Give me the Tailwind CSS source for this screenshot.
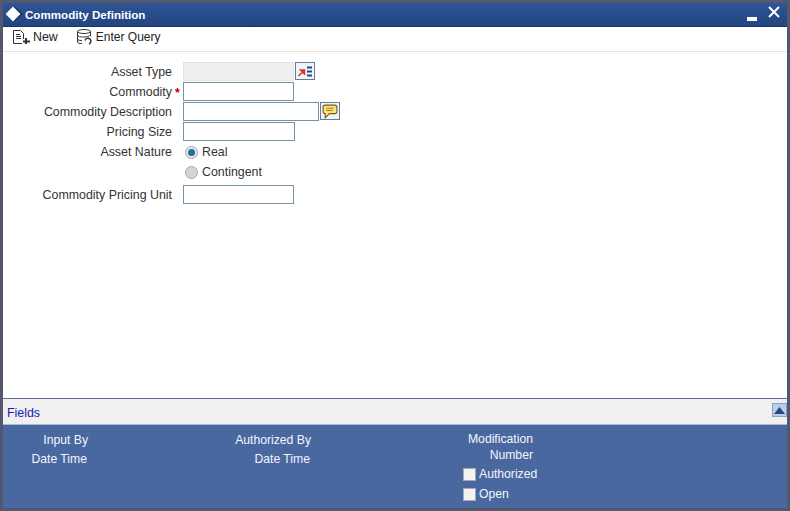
<!DOCTYPE html>
<html lang="en">
<head>
    <meta charset="UTF-8">
    <title>Commodity Definition</title>
    <script src="https://cdn.jsdelivr.net/npm/@tailwindcss/browser@4"></script>
</head>
<body class="w-[790px] h-[511px] overflow-hidden bg-[#53586f] font-['Liberation_Sans',Arial,sans-serif] text-[12.4px]">
    <div class="w-[790px] h-[511px] p-[3px] flex flex-col">
        <!-- Title bar -->
        <div class="h-[24px] flex items-center bg-gradient-to-b from-[#2f5597] to-[#23447f] border-b border-[#1a3566] text-white shrink-0">
            <svg class="w-[18px] h-[16px] ml-[2px] -mt-[1px]" viewBox="0 0 18 16"><path d="M9 0L18 8L9 16L0 8Z" fill="#16305f"/><path d="M8 0.500L15.500 8L8 15.500L0.500 8Z" fill="#fff"/></svg>
            <span class="ml-[2px] text-[11.6px] font-bold">Commodity Definition</span>
            <div class="ml-auto flex items-start mr-[7px]">
                <svg class="w-[10px] h-[5px] mt-[7px]" viewBox="0 0 10 5"><rect width="10" height="4" y="1" fill="#fff"/></svg>
                <svg class="w-[12px] h-[12px] ml-[11px] -mt-[3px]" viewBox="0 0 12 12"><path d="M1 1L11 11M11 1L1 11" stroke="#fff" stroke-width="2"/></svg>
            </div>
        </div>
        <!-- Toolbar -->
        <div class="h-[25px] flex items-center pb-[4px] bg-white border-b border-[#e4e4e4] text-[#222] shrink-0">
            <svg class="w-[18px] h-[15px] ml-[10px]" viewBox="0 0 18 15" fill="none" stroke="#333"><path d="M0.500 13.500V0.500H7.500L10.500 3.500V9M0.500 13.500H9"/><path d="M3 4.500H7M3 6.500H8M3 8.500H8"/><path d="M13 8V14M10 11.500H17" stroke-width="2"/></svg>
            <span class="ml-[2px]">New</span>
            <svg class="w-[17px] h-[16px] ml-[18px]" viewBox="0 0 17 16" fill="none" stroke="#333"><ellipse cx="8" cy="2.500" rx="6.500" ry="2"/><path d="M1.500 2.500V13C1.500 14 3 14.500 6 14.500M14.500 2.500V7M1.500 6C1.500 7.500 4 8 8 8C11 8 13 7.500 14.500 6M1.500 10C1.500 11 3 11.500 6 11.500"/><path d="M9 11.500A3 3 0 1 1 13 15" stroke-width="1.500"/></svg>
            <span class="ml-[3px] text-[12px]">Enter Query</span>
        </div>
        <!-- Form -->
        <div class="flex-1 bg-white pt-[10px] min-h-0">
            <div class="grid grid-cols-[169px_1fr] gap-x-[11px] auto-rows-[20px] text-[#333]">
                <label class="text-right leading-[20px]">Asset Type</label>
                <div class="flex items-start">
                    <div class="w-[111px] h-[19px] bg-[#efefef] border border-[#e4e4e4]"></div>
                    <div class="w-[20px] h-[18px] ml-[1px] bg-[#f0f4fb] border border-[#5f7f9c] flex items-center justify-center">
                        <svg class="w-[16px] h-[13px]" viewBox="0 0 16 13"><path d="M1.500 11L5.500 7M3.500 5H7.500V9Z" stroke="#d43a1a" stroke-width="1.500" fill="#d43a1a"/><path d="M10 2.500H15M10 6.500H15M10 10.500H15" stroke="#24477f" stroke-width="2"/></svg>
                    </div>
                </div>
                <label class="text-right leading-[20px] relative">Commodity<span class="absolute left-[172px] top-[1px] text-[#c00] font-bold">*</span></label>
                <div class="flex items-start"><input class="w-[111px] h-[19px] bg-white border border-[#7593a8]"></div>
                <label class="text-right leading-[20px]">Commodity Description</label>
                <div class="flex items-start">
                    <input class="w-[136px] h-[19px] bg-white border border-[#7593a8]">
                    <div class="w-[20px] h-[18px] ml-[1px] bg-[#f0f4fb] border border-[#5f7f9c] flex items-center justify-center">
                        <svg class="w-[16px] h-[15px]" viewBox="0 0 15 14"><path d="M3 1H12C13.500 1 14 2 14 3V7C14 8.500 13 9 12 9H7L3 13V9C2 9 1 8.500 1 7V3C1 2 2 1 3 1Z" fill="#ffe27a" stroke="#7a5b10"/><path d="M4 4H11M4 6H10" stroke="#9a7b20"/></svg>
                    </div>
                </div>
                <label class="text-right leading-[20px]">Pricing Size</label>
                <div class="flex items-start"><input class="w-[112px] h-[19px] bg-white border border-[#7593a8]"></div>
                <label class="text-right leading-[20px]">Asset Nature</label>
                <div class="flex items-center pl-[2px]">
                    <svg class="w-[13px] h-[13px]" viewBox="0 0 13 13"><circle cx="6.500" cy="6.500" r="6" fill="#e4e4e4" stroke="#a8a8a8"/><circle cx="6.500" cy="6.500" r="3.500" fill="#1f6f9f"/></svg>
                    <span class="ml-[4px]">Real</span>
                </div>
                <div></div>
                <div class="flex items-center pl-[2px]">
                    <svg class="w-[13px] h-[13px]" viewBox="0 0 13 13"><circle cx="6.500" cy="6.500" r="6" fill="#d4d4d4" stroke="#a8a8a8"/></svg>
                    <span class="ml-[4px]">Contingent</span>
                </div>
                <label class="text-right leading-[26px] h-[26px]">Commodity Pricing Unit</label>
                <div class="flex items-start pt-[3px] h-[26px]"><input class="w-[111px] h-[19px] bg-white border border-[#7593a8]"></div>
            </div>
        </div>
        <!-- Fields bar -->
        <div class="h-[27px] flex items-center bg-[#f0f0f0] border-t border-[#5c6f92] border-b border-b-[#a9b9d6] shrink-0">
            <span class="ml-[4px] mt-[3px] text-[#1a1aa8]">Fields</span>
            <div class="ml-auto w-[15px] h-[14px] -mt-[3px] bg-[#b9cdec] border border-[#8aa2cb] flex items-center justify-center">
                <svg class="w-[11px] h-[7px]" viewBox="0 0 11 7"><path d="M5.500 0L11 7H0Z" fill="#24477f"/></svg>
            </div>
        </div>
        <!-- Audit footer -->
        <div class="h-[83px] bg-[#4a68a0] text-[#f2f5fa] text-[12.2px] shrink-0 flex pt-[6px]">
            <div class="w-[85px] text-right leading-[19px]">
                <div>Input By</div>
                <div class="pr-[1px]">Date Time</div>
            </div>
            <div class="w-[223px] text-right leading-[19px]">
                <div>Authorized By</div>
                <div class="pr-[1px]">Date Time</div>
            </div>
            <div class="w-[222px] text-right">
                <div class="leading-[17px]">Modification</div>
                <div class="leading-[14px]">Number</div>
            </div>
            <div class="-ml-[70px] mt-[37px] flex flex-col gap-[7px]">
                <label class="flex items-center h-[13px] whitespace-nowrap"><span class="w-[13px] h-[13px] bg-[#f2f2f2] border border-[#aaa]"></span><span class="ml-[3px]">Authorized</span></label>
                <label class="flex items-center h-[13px] whitespace-nowrap"><span class="w-[13px] h-[13px] bg-[#f2f2f2] border border-[#aaa]"></span><span class="ml-[3px]">Open</span></label>
            </div>
        </div>
    </div>
</body>
</html>
